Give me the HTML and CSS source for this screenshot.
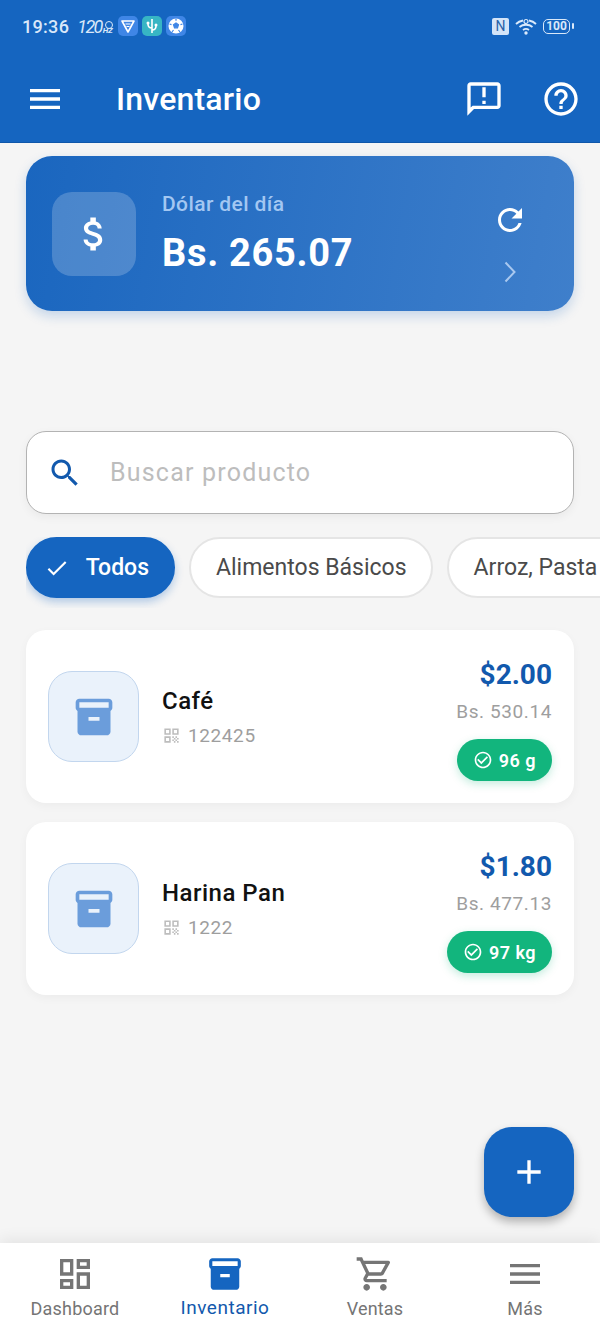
FILE: index.html
```html
<!DOCTYPE html>
<html lang="es">
<head>
    <meta charset="UTF-8">
    <meta name="viewport" content="width=device-width, initial-scale=1.0">
    <title>Inventario</title>
    <link rel="stylesheet" href="styles.css">
</head>
<body>
    <svg class="icon-defs" aria-hidden="true">
        <symbol id="i-menu" viewBox="0 0 24 24"><path d="M3 18h18v-2H3v2zm0-5h18v-2H3v2zm0-7v2h18V6H3z"/></symbol>
        <symbol id="i-box" viewBox="0 0 24 24"><path d="M20 2H4c-1 0-2 .9-2 2v3.010c0 .72.43 1.340 1 1.690V20c0 1.100 1.100 2 2 2h14c.9 0 2-.9 2-2V8.700c.57-.35 1-.97 1-1.690V4c0-1.100-1-2-2-2zm-5 12H9v-2h6v2zm5-7H4V4l16-.02V7z"/></symbol>
        <symbol id="i-qr" viewBox="0 0 24 24"><path d="M3 11h8V3H3v8zm2-6h4v4H5V5zM3 21h8v-8H3v8zm2-6h4v4H5v-4zM13 3v8h8V3h-8zm6 6h-4V5h4v4zM19 19h2v2h-2zM13 13h2v2h-2zM15 15h2v2h-2zM13 17h2v2h-2zM15 19h2v2h-2zM17 17h2v2h-2zM17 13h2v2h-2zM19 15h2v2h-2z"/></symbol>
        <symbol id="i-ok" viewBox="0 0 24 24"><path d="M16.590 7.580L10 14.170l-3.590-3.580L5 12l5 5 8-8zM12 2C6.480 2 2 6.480 2 12s4.480 10 10 10 10-4.480 10-10S17.520 2 12 2zm0 18c-4.420 0-8-3.580-8-8s3.580-8 8-8 8 3.580 8 8-3.580 8-8 8z"/></symbol>
    </svg>

    <div class="app">
        <header class="topbar">
            <div class="status">
                <span class="status-time">19:36</span>
                <span class="status-hz">120<small>HZ</small></span>
                <span class="tile tile-blue">
                    <svg viewBox="0 0 20 20"><path d="M4 5h12l-6 11z" fill="none" stroke="#fff" stroke-width="1.600" stroke-linejoin="round"/><path d="M7.500 8h5M8.500 10.500h3" stroke="#fff" stroke-width="1.200"/></svg>
                </span>
                <span class="tile tile-teal">
                    <svg viewBox="0 0 20 20"><path d="M10 3v14M10 12c-3 0-4-1-4-4M10 14c3 0 4-1 4-4" fill="none" stroke="#fff" stroke-width="1.600"/><circle cx="6" cy="7" r="1.500" fill="#fff"/><circle cx="14" cy="9" r="1.500" fill="#fff"/></svg>
                </span>
                <span class="tile tile-blue">
                    <svg viewBox="0 0 20 20"><circle cx="10" cy="10" r="7.500" fill="#fff"/><path d="M10 7l2.500 1.800-1 3h-3l-1-3zM10 2.800v2M3.500 8l2 .6M16.500 8l-2 .6M6 16l1.500-2M14 16l-1.500-2" fill="#3f86e6" stroke="#3f86e6" stroke-width="1.200"/></svg>
                </span>
                <span class="status-right">
                    <span class="nfc">N</span>
                    <svg class="wifi" viewBox="0 0 22 18"><path d="M1 7C3 5 5 4 8 3.500M14 3.500c3 .5 5 1.500 7 3.500M4.500 10c3.500-3 9.500-3 13 0M8 13c1.800-1.300 4.200-1.300 6 0" fill="none" stroke="#dbeafb" stroke-width="1.800"/><circle cx="11" cy="4.500" r="2" fill="none" stroke="#dbeafb" stroke-width="1.200"/><circle cx="11" cy="16" r="1.700" fill="#dbeafb"/></svg>
                    <span class="battery">100</span>
                </span>
            </div>
            <div class="toolbar">
                <button class="tool-btn"><svg><use href="#i-menu"/></svg></button>
                <h1>Inventario</h1>
                <button class="tool-btn tool-feedback">
                    <svg viewBox="0 0 24 24"><path d="M20 2H4c-1.100 0-2 .9-2 2v18l4-4h14c1.100 0 2-.9 2-2V4c0-1.100-.9-2-2-2zm0 14H5.170L4 17.170V4h16v12zM11 5h2v6h-2zm0 8h2v2h-2z"/></svg>
                </button>
                <button class="tool-btn tool-help">
                    <svg viewBox="0 0 24 24"><path d="M11 18h2v-2h-2v2zm1-16C6.480 2 2 6.480 2 12s4.480 10 10 10 10-4.480 10-10S17.520 2 12 2zm0 18c-4.410 0-8-3.590-8-8s3.590-8 8-8 8 3.590 8 8-3.590 8-8 8zm0-14c-2.210 0-4 1.790-4 4h2c0-1.100.9-2 2-2s2 .9 2 2c0 2-3 1.750-3 5h2c0-2.250 3-2.500 3-5 0-2.210-1.790-4-4-4z"/></svg>
                </button>
            </div>
        </header>

        <main class="content">
            <section class="rate-card">
                <div class="rate-icon">
                    <svg viewBox="0 0 24 24"><path d="M11.800 10.900c-2.270-.59-3-1.200-3-2.150 0-1.090 1.010-1.850 2.700-1.850 1.780 0 2.440.85 2.500 2.100h2.210c-.07-1.720-1.120-3.300-3.210-3.810V3h-3v2.160c-1.940.42-3.500 1.680-3.500 3.610 0 2.310 1.910 3.460 4.700 4.130 2.500.6 3 1.480 3 2.410 0 .69-.49 1.790-2.700 1.790-2.060 0-2.870-.92-2.980-2.100h-2.200c.12 2.190 1.760 3.420 3.680 3.830V21h3v-2.150c1.950-.37 3.500-1.500 3.500-3.550 0-2.840-2.430-3.810-4.700-4.400z"/></svg>
                </div>
                <div class="rate-text">
                    <span class="rate-label">Dólar del día</span>
                    <strong class="rate-value">Bs. 265.07</strong>
                </div>
                <div class="rate-actions">
                    <svg class="rate-refresh" viewBox="0 0 24 24"><path d="M17.650 6.350C16.200 4.900 14.210 4 12 4c-4.420 0-7.990 3.580-7.990 8s3.570 8 7.990 8c3.730 0 6.840-2.550 7.730-6h-2.080c-.82 2.330-3.040 4-5.650 4-3.310 0-6-2.690-6-6s2.690-6 6-6c1.660 0 3.140.69 4.220 1.780L13 11h7V4l-2.350 2.350z"/></svg>
                    <svg class="rate-chevron" viewBox="0 0 12 22"><path d="M1.500 1.500l9 9.500-9 9.500" fill="none" stroke="currentColor" stroke-width="2"/></svg>
                </div>
            </section>

            <div class="search">
                <svg viewBox="0 0 24 24"><path d="M15.500 14h-.79l-.28-.27C15.410 12.590 16 11.110 16 9.500 16 5.910 13.090 3 9.500 3S3 5.910 3 9.500 5.910 16 9.500 16c1.610 0 3.090-.59 4.230-1.570l.27.28v.79l5 4.990L20.490 19l-4.990-5zm-6 0C7.010 14 5 11.990 5 9.500S7.010 5 9.500 5 14 7.010 14 9.500 11.990 14 9.500 14z"/></svg>
                <span class="search-hint">Buscar producto</span>
            </div>

            <div class="chips">
                <span class="chip chip-active">
                    <svg viewBox="0 0 24 24"><path d="M9 16.170L4.830 12l-1.420 1.410L9 19 21 7l-1.410-1.410z"/></svg>
                    Todos
                </span>
                <span class="chip">Alimentos Básicos</span>
                <span class="chip chip-cut">Arroz, Pasta</span>
            </div>

            <ul class="products">
                <li class="product">
                    <div class="product-thumb"><svg><use href="#i-box"/></svg></div>
                    <div class="product-info">
                        <span class="product-name">Café</span>
                        <span class="product-code"><svg><use href="#i-qr"/></svg>122425</span>
                    </div>
                    <div class="product-side">
                        <span class="price">$2.00</span>
                        <span class="price-bs">Bs. 530.14</span>
                        <span class="stock"><svg><use href="#i-ok"/></svg>96 g</span>
                    </div>
                </li>
                <li class="product">
                    <div class="product-thumb"><svg><use href="#i-box"/></svg></div>
                    <div class="product-info">
                        <span class="product-name">Harina Pan</span>
                        <span class="product-code"><svg><use href="#i-qr"/></svg>1222</span>
                    </div>
                    <div class="product-side">
                        <span class="price">$1.80</span>
                        <span class="price-bs">Bs. 477.13</span>
                        <span class="stock"><svg><use href="#i-ok"/></svg>97 kg</span>
                    </div>
                </li>
            </ul>
        </main>

        <button class="fab">
            <svg viewBox="0 0 24 24"><path d="M19 13h-6v6h-2v-6H5v-2h6V5h2v6h6v2z"/></svg>
        </button>

        <nav class="bottom-nav">
            <a class="nav-item">
                <svg viewBox="0 0 24 24"><path d="M19 5v2h-4V5h4M9 5v6H5V5h4m10 8v6h-4v-6h4M9 17v2H5v-2h4M21 3h-8v6h8V3zM11 3H3v10h8V3zm10 8h-8v10h8V11zm-10 4H3v6h8v-6z"/></svg>
                Dashboard
            </a>
            <a class="nav-item nav-active">
                <svg><use href="#i-box"/></svg>
                Inventario
            </a>
            <a class="nav-item">
                <svg viewBox="0 0 24 24"><path d="M15.550 13c.75 0 1.410-.41 1.750-1.030l3.580-6.490c.37-.66-.11-1.480-.87-1.480H5.210l-.94-2H1v2h2l3.600 7.590-1.350 2.440C4.520 15.370 5.480 17 7 17h12v-2H7l1.100-2h7.450zM6.160 6h12.150l-2.760 5H8.530L6.160 6zM7 18c-1.100 0-1.990.9-1.990 2S5.900 22 7 22s2-.9 2-2-.9-2-2-2zm10 0c-1.100 0-1.990.9-1.990 2s.89 2 1.990 2 2-.9 2-2-.9-2-2-2z"/></svg>
                Ventas
            </a>
            <a class="nav-item">
                <svg><use href="#i-menu"/></svg>
                Más
            </a>
        </nav>
    </div>
</body>
</html>
```
FILE: styles.css
```css
* {
    box-sizing: border-box;
}

body {
    margin: 0;
    font-family: Roboto, "Liberation Sans", sans-serif;
    background-color: #f5f5f5;
}

.icon-defs {
    display: none;
}

.app {
    position: relative;
    display: flex;
    flex-direction: column;
    height: 1333px;
    overflow: hidden;
}

/* header */
.topbar {
    height: 143px;
    background-color: #1565c0;
    border-bottom: 1px solid #0f57aa;
    color: #fff;
}

.status {
    display: flex;
    align-items: center;
    height: 52px;
    padding: 0 26px 0 22px;
    color: #d9e8f9;
}

.status-time {
    font-size: 18px;
    font-weight: 500;
    letter-spacing: 0.3px;
    margin-right: 8px;
}

.status-hz {
    font-size: 18px;
    font-style: italic;
    letter-spacing: -1.6px;
    margin-right: 6px;
}

.status-hz small {
    position: relative;
    font-size: 8px;
    font-weight: 700;
    letter-spacing: -0.3px;
    margin-left: 1px;
}

.status-hz small::before {
    content: "";
    position: absolute;
    left: 2px;
    top: -5px;
    width: 6px;
    height: 6px;
    border: 1px solid #d9e8f9;
    border-radius: 50%;
}

.tile {
    display: flex;
    width: 20px;
    height: 20px;
    border-radius: 5px;
    margin-right: 4px;
}

.tile-blue {
    background-color: #3f86e6;
}

.tile-teal {
    background-color: #37b5c4;
}

.status-right {
    display: flex;
    align-items: center;
    gap: 6px;
    margin-left: auto;
}

.nfc {
    width: 17px;
    height: 17px;
    background-color: #d3e4f8;
    border-radius: 2px;
    color: #2a62a8;
    font-size: 14px;
    line-height: 17px;
    text-align: center;
}

.wifi {
    width: 22px;
    height: 18px;
}

.battery {
    position: relative;
    width: 27px;
    height: 15px;
    margin-right: 4px;
    border: 1.500px solid #d9e8f9;
    border-radius: 5px;
    font-size: 12px;
    font-weight: 700;
    line-height: 12px;
    text-align: center;
}

.battery::after {
    content: "";
    position: absolute;
    right: -5px;
    top: 3px;
    width: 2px;
    height: 6px;
    background-color: #d9e8f9;
    border-radius: 1px;
}

.toolbar {
    display: flex;
    align-items: center;
    height: 90px;
    padding: 4px 2px 0 25px;
}

.toolbar h1 {
    flex: 1;
    margin: 0 0 0 51px;
    font-size: 32px;
    font-weight: 500;
    letter-spacing: 0.2px;
}

.tool-btn {
    display: flex;
    padding: 0;
    border: none;
    background: none;
}

.tool-btn svg {
    width: 40px;
    height: 40px;
    fill: #fff;
}

.tool-feedback {
    margin-right: 37px;
}

.tool-help {
    margin-right: 17px;
}

/* main */
.content {
    flex: 1;
    padding: 13px 26px 0;
}

.rate-card {
    display: flex;
    align-items: center;
    height: 155px;
    padding: 0 26px;
    border-radius: 26px;
    background: linear-gradient(100deg, #1a66bf, #3f7fcb);
    box-shadow: 0 5px 12px rgba(21, 101, 192, 0.22);
    color: #fff;
}

.rate-icon {
    display: flex;
    align-items: center;
    justify-content: center;
    width: 84px;
    height: 84px;
    border-radius: 20px;
    background-color: rgba(255, 255, 255, 0.2);
}

.rate-icon svg {
    width: 44px;
    height: 44px;
    fill: #fff;
}

.rate-text {
    flex: 1;
    display: flex;
    flex-direction: column;
    margin-left: 26px;
    padding-bottom: 1px;
}

.rate-label {
    color: #a3c7f2;
    font-size: 21px;
    font-weight: 500;
    letter-spacing: 0.4px;
}

.rate-value {
    margin-top: 15px;
    font-size: 38px;
    font-weight: 700;
    letter-spacing: 0.7px;
}

.rate-actions {
    display: flex;
    flex-direction: column;
    align-items: center;
    width: 36px;
    margin: 18px 20px 0 0;
    color: #a9c8ef;
}

.rate-refresh {
    width: 36px;
    height: 36px;
    fill: #fff;
}

.rate-chevron {
    width: 12px;
    height: 22px;
    margin-top: 23px;
}

.search {
    display: flex;
    align-items: center;
    height: 83px;
    margin-top: 120px;
    padding: 0 25px 0 20px;
    background-color: #fff;
    border: 1px solid #b3b3b3;
    border-radius: 20px;
    box-shadow: 0 3px 10px rgba(0, 0, 0, 0.05);
}

.search svg {
    width: 36px;
    height: 36px;
    fill: #1259ad;
}

.search-hint {
    margin-left: 27px;
    color: #bdbdbd;
    font-size: 25px;
    letter-spacing: 1.2px;
}

.chips {
    display: flex;
    gap: 14px;
    margin: 23px -26px 0 0;
    overflow: hidden;
    padding-bottom: 10px;
}

.chip {
    display: flex;
    flex: none;
    align-items: center;
    height: 61px;
    padding: 0 24px 0 25px;
    background-color: #fff;
    border: 2px solid #e5e5e5;
    border-radius: 31px;
    color: #4a4a4a;
    font-size: 23px;
}

.chip-active {
    gap: 16px;
    width: 149px;
    padding: 0 24px 0 16px;
    background-color: #1565c0;
    border-color: #1565c0;
    box-shadow: 0 4px 8px rgba(21, 101, 192, 0.3);
    color: #fff;
    font-weight: 500;
}

.chip-active svg {
    width: 26px;
    height: 26px;
    fill: #fff;
}

.chip-cut {
    width: 220px;
}

.products {
    display: flex;
    flex-direction: column;
    gap: 19px;
    margin: 22px 0 0;
    padding: 0;
    list-style: none;
}

.product {
    display: flex;
    align-items: center;
    height: 173px;
    padding: 0 22px;
    background-color: #fff;
    border-radius: 20px;
    box-shadow: 0 3px 10px rgba(0, 0, 0, 0.04);
}

.product-thumb {
    display: flex;
    align-items: center;
    justify-content: center;
    width: 91px;
    height: 91px;
    background-color: #eaf2fb;
    border: 1px solid #c2d6ee;
    border-radius: 24px;
}

.product-thumb svg {
    width: 44px;
    height: 44px;
    fill: #6b9ddb;
}

.product-info {
    flex: 1;
    display: flex;
    flex-direction: column;
    gap: 9px;
    margin-left: 23px;
}

.product-name {
    color: #111;
    font-size: 24px;
    font-weight: 500;
    letter-spacing: 0.5px;
}

.product-code {
    display: flex;
    align-items: center;
    gap: 7px;
    color: #9e9e9e;
    font-size: 19px;
    letter-spacing: 0.6px;
}

.product-code svg {
    width: 19px;
    height: 19px;
    fill: #bdbdbd;
}

.product-side {
    display: flex;
    flex-direction: column;
    align-items: flex-end;
    padding-top: 6px;
}

.price {
    color: #1259ad;
    font-size: 28px;
    font-weight: 700;
}

.price-bs {
    margin-top: 9px;
    color: #9e9e9e;
    font-size: 19px;
    letter-spacing: 0.6px;
}

.stock {
    display: flex;
    align-items: center;
    gap: 6px;
    height: 42px;
    margin-top: 16px;
    padding: 0 16px;
    background-color: #12b57d;
    border-radius: 21px;
    box-shadow: 0 3px 8px rgba(18, 181, 125, 0.25);
    color: #fff;
    font-size: 18px;
    font-weight: 600;
    letter-spacing: 0.5px;
}

.stock svg {
    width: 20px;
    height: 20px;
    fill: #fff;
}

.fab {
    position: absolute;
    right: 26px;
    bottom: 116px;
    display: flex;
    align-items: center;
    justify-content: center;
    width: 90px;
    height: 90px;
    padding: 0;
    background-color: #1565c0;
    border: none;
    border-radius: 28px;
    box-shadow: 0 5px 10px rgba(0, 0, 0, 0.28);
}

.fab svg {
    width: 40px;
    height: 40px;
    fill: #fff;
}

/* bottom nav */
.bottom-nav {
    display: flex;
    height: 90px;
    background-color: #fff;
    box-shadow: 0 -4px 14px rgba(0, 0, 0, 0.07);
}

.nav-item {
    flex: 1;
    display: flex;
    flex-direction: column;
    align-items: center;
    padding-top: 11px;
    color: #757575;
    font-size: 18px;
    letter-spacing: 0.2px;
}

.nav-item svg {
    width: 40px;
    height: 40px;
    margin-bottom: 4px;
    fill: #757575;
}

.nav-active {
    padding-top: 12px;
    color: #1259ad;
    font-size: 19px;
    letter-spacing: 0.5px;
}

.nav-active svg {
    width: 38px;
    height: 38px;
    margin-bottom: 3px;
    fill: #1565c0;
}
```
